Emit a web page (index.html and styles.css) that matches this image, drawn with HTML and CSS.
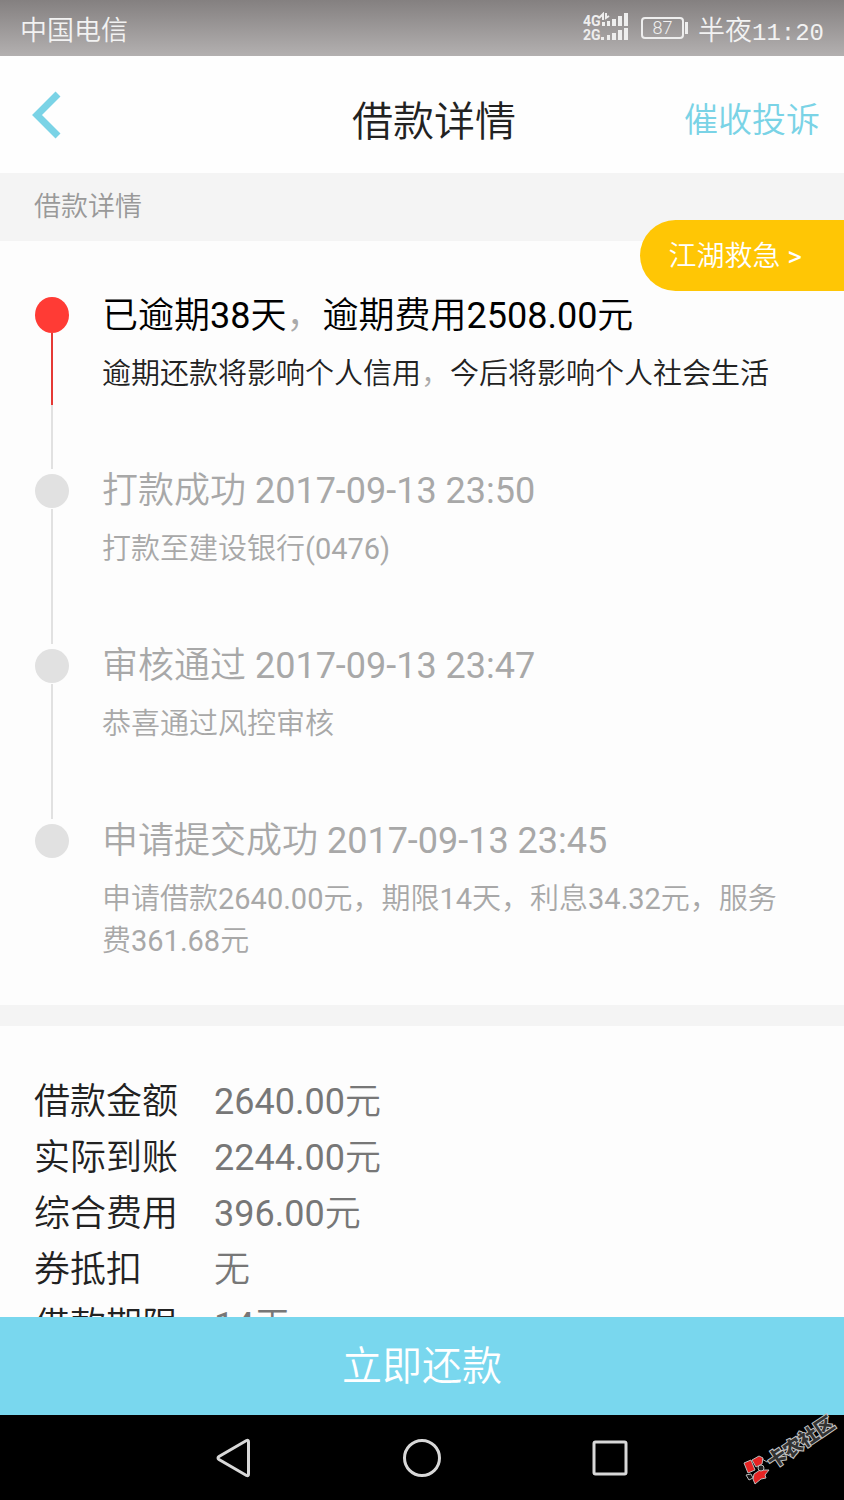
FILE: index.html
```html
<!DOCTYPE html>
<html lang="zh-CN">
<head>
<meta charset="utf-8">
<meta name="viewport" content="width=device-width, initial-scale=1">
<title>借款详情</title>
<link rel="stylesheet" href="styles.css">
</head>
<body>
<div class="status-bar">
  <span class="carrier">中国电信</span>
  <div class="status-right">
    <svg class="signal" viewBox="0 0 46 32" width="46" height="32" aria-hidden="true">
      <g class="signal-label">
        <text x="0" y="14">4G</text>
        <text x="0" y="28">2G</text>
      </g>
      <path d="M16 6l4-4v6M23 1v5l3-2" fill="none" stroke="#eee" stroke-width="2"/>
      <path d="M19 10h3v4h-3zM24 9h3v5h-3zM29 7h4v7h-4zM35 4h4v10h-4zM41 1h4v13h-4zM18 25h3v3h-3zM24 23h3v5h-3zM29 21h4v7h-4zM35 18h4v10h-4zM41 16h4v12h-4z" fill="#eee"/>
    </svg>
    <span class="battery">87</span>
    <span class="clock">半夜<span class="clock-digits">11:20</span></span>
  </div>
</div>

<header class="app-bar">
  <button class="back" type="button" aria-label="返回">
    <svg viewBox="0 0 30 48" width="30" height="48" aria-hidden="true"><path d="M26 3L5 24L26 45" fill="none" stroke="#7ad3e6" stroke-width="7"/></svg>
  </button>
  <h1 class="title">借款详情</h1>
  <a class="complain" href="#">催收投诉</a>
</header>

<main class="content">
  <h2 class="section-label">借款详情</h2>
  <a class="rescue" href="#">江湖救急 &gt;</a>

  <ol class="timeline">
    <li class="step step-active">
      <div class="marker"><span class="dot"></span><span class="line-red"></span><span class="line"></span></div>
      <div>
        <h3 class="step-title">已逾期38天<span class="comma">，</span>逾期费用2508.00元</h3>
        <p class="step-text">逾期还款将影响个人信用<span class="comma">，</span>今后将影响个人社会生活</p>
      </div>
    </li>
    <li class="step">
      <div class="marker"><span class="dot"></span><span class="line"></span></div>
      <div>
        <h3 class="step-title">打款成功 2017-09-13 23:50</h3>
        <p class="step-text">打款至建设银行(0476)</p>
      </div>
    </li>
    <li class="step">
      <div class="marker"><span class="dot"></span><span class="line"></span></div>
      <div>
        <h3 class="step-title">审核通过 2017-09-13 23:47</h3>
        <p class="step-text">恭喜通过风控审核</p>
      </div>
    </li>
    <li class="step">
      <div class="marker"><span class="dot"></span></div>
      <div>
        <h3 class="step-title">申请提交成功 2017-09-13 23:45</h3>
        <p class="step-text">申请借款2640.00元，期限14天，利息34.32元，服务费361.68元</p>
      </div>
    </li>
  </ol>

  <dl class="details">
    <dt>借款金额</dt><dd>2640.00元</dd>
    <dt>实际到账</dt><dd>2244.00元</dd>
    <dt>综合费用</dt><dd>396.00元</dd>
    <dt>券抵扣</dt><dd>无</dd>
    <dt>借款期限</dt><dd>14天</dd>
  </dl>
</main>

<button class="repay" type="button">立即还款</button>

<nav class="system-nav">
  <button type="button" aria-label="返回">
    <svg viewBox="0 0 40 40" width="40" height="40" aria-hidden="true"><path d="M32.500 2.500Q34.500 1.500 34.500 4V36Q34.500 38.500 32.500 37.500L5 21.500Q3 20 5 18.500Z"/></svg>
  </button>
  <button type="button" aria-label="主屏幕">
    <svg viewBox="0 0 40 40" width="40" height="40" aria-hidden="true"><circle cx="20" cy="20" r="17.500"/></svg>
  </button>
  <button type="button" aria-label="最近任务">
    <svg viewBox="0 0 40 40" width="40" height="40" aria-hidden="true"><rect x="4" y="4" width="32" height="32" rx="1.500"/></svg>
  </button>
</nav>

<svg class="watermark" viewBox="0 0 104 84" width="104" height="84" role="img" aria-label="卡农社区">
  <g stroke="#bbb" stroke-width="1">
    <path d="M4 55l7-3 4 10-7 3z" fill="#e62424"/>
    <path d="M12 52l7-4 4 2-1 6-6 3z" fill="#e62424"/>
    <path d="M14 66l6-4 9 0-4 5 1 3-5 1-6 5-2-5z" fill="#e62424"/>
    <circle cx="21" cy="60" r="3" fill="#222"/>
    <path d="M6 67l5-1 2 4-4 2z" fill="#111"/>
    <path d="M22 51l5 3 4-2" fill="none"/>
  </g>
  <text class="watermark-text" transform="translate(33 61) rotate(-34)">卡农社区</text>
</svg>
</body>
</html>
```

FILE: styles.css
```css
* {
  box-sizing: border-box;
}

body {
  position: relative;
  display: flex;
  flex-direction: column;
  height: 100vh;
  margin: 0;
  overflow: hidden;
  background: #fdfdfd;
  color: #222;
  font-family: Roboto, "Noto Sans CJK SC DemiLight", "Noto Sans CJK SC", sans-serif;
  font-weight: 400;
}

h1, h2, h3, p, ol, dl, dd {
  margin: 0;
  padding: 0;
  font-weight: inherit;
}

button {
  padding: 0;
  border: 0;
  background: none;
  font: inherit;
  cursor: pointer;
}

a {
  text-decoration: none;
}

svg {
  display: block;
}

.status-bar {
  display: flex;
  flex: none;
  align-items: center;
  justify-content: space-between;
  height: 56px;
  padding: 0 20px;
  background: linear-gradient(#848080, #b3b0b0);
  color: #f2f2f2;
  font-size: 27px;
  font-weight: 300;
}

.status-right {
  display: flex;
  align-items: center;
}

.signal {
  margin-right: 12px;
}

.signal-label {
  fill: #eee;
  font-family: Roboto, sans-serif;
  font-size: 14px;
  font-weight: 700;
}

.battery {
  position: relative;
  width: 43px;
  height: 22px;
  margin-right: 14px;
  border: 2px solid #eee;
  border-radius: 4px;
  font-size: 18px;
  line-height: 18px;
  text-align: center;
}

.battery::after {
  position: absolute;
  top: 3px;
  right: -6px;
  width: 3px;
  height: 12px;
  background: #eee;
  content: "";
}

.clock-digits {
  font-family: "Liberation Mono", monospace;
  font-size: 24px;
}

.app-bar {
  display: grid;
  flex: none;
  grid-template-columns: 1fr auto 1fr;
  align-items: center;
  height: 117px;
  padding: 6px 24px 0 32px;
  background: #fefefe;
  font-weight: 300;
}

.back {
  justify-self: start;
  padding-bottom: 6px;
}

.title {
  padding-left: 16px;
  font-size: 41px;
}

.complain {
  justify-self: end;
  color: #7ad3e6;
  font-size: 34px;
}

.content {
  position: relative;
  flex: 1;
  min-height: 0;
  overflow-y: auto;
  scrollbar-width: none;
}

.section-label {
  padding: 0 34px;
  background: #f4f4f4;
  color: #999;
  font-size: 27px;
  line-height: 68px;
}

.rescue {
  position: absolute;
  top: 47px;
  right: 0;
  padding: 3px 42px 0 28px;
  border-radius: 36px 0 0 36px;
  background: #ffc605;
  color: #fff;
  font-size: 28px;
  line-height: 68px;
}

.timeline {
  padding: 48px 50px 43px 34px;
  list-style: none;
}

.step {
  display: grid;
  grid-template-columns: 36px 1fr;
  gap: 32px;
  min-height: 175px;
  color: #a8a8a8;
}

.step:last-child {
  min-height: 0;
}

.marker {
  display: flex;
  flex-direction: column;
  align-items: center;
  padding-top: 10px;
}

.dot {
  width: 34px;
  height: 34px;
  border-radius: 50%;
  background: #e1e1e1;
}

.line {
  flex: 1;
  width: 2px;
  margin: 1px 0 -5px;
  background: #e1e1e1;
}

.line-red {
  width: 2px;
  height: 72px;
  background: #e53935;
}

.step-active .dot {
  height: 36px;
  margin-top: -2px;
  background: #ff3b35;
}

.step-active .line {
  margin-top: 0;
}

.step-title {
  margin-bottom: 10px;
  font-size: 36px;
  line-height: 54px;
}

.step-text {
  font-size: 29px;
  line-height: 42px;
}

.step-active .step-title {
  color: #000;
}

.step-active .step-text {
  color: #222;
}

.step-active .comma {
  color: #aaa;
}

.details {
  display: grid;
  grid-template-columns: 180px 1fr;
  padding: 48px 34px;
  border-top: 21px solid #f4f4f4;
  font-size: 36px;
  line-height: 56px;
}

.details dd {
  color: #777;
}

.repay {
  flex: none;
  height: 98px;
  padding-bottom: 6px;
  background: #79d7ee;
  color: #fff;
  font-size: 40px;
}

.system-nav {
  display: flex;
  flex: none;
  align-items: center;
  justify-content: center;
  gap: 148px;
  height: 85px;
  background: #000;
}

.system-nav svg {
  fill: none;
  stroke: #d8d8d8;
  stroke-width: 3;
}

.watermark {
  position: absolute;
  right: 0;
  bottom: 8px;
}

.watermark-text {
  fill: #333;
  stroke: #c4c4c4;
  stroke-width: 2px;
  paint-order: stroke;
  font-family: "Noto Sans CJK SC", sans-serif;
  font-size: 19px;
  font-weight: 900;
}
```
